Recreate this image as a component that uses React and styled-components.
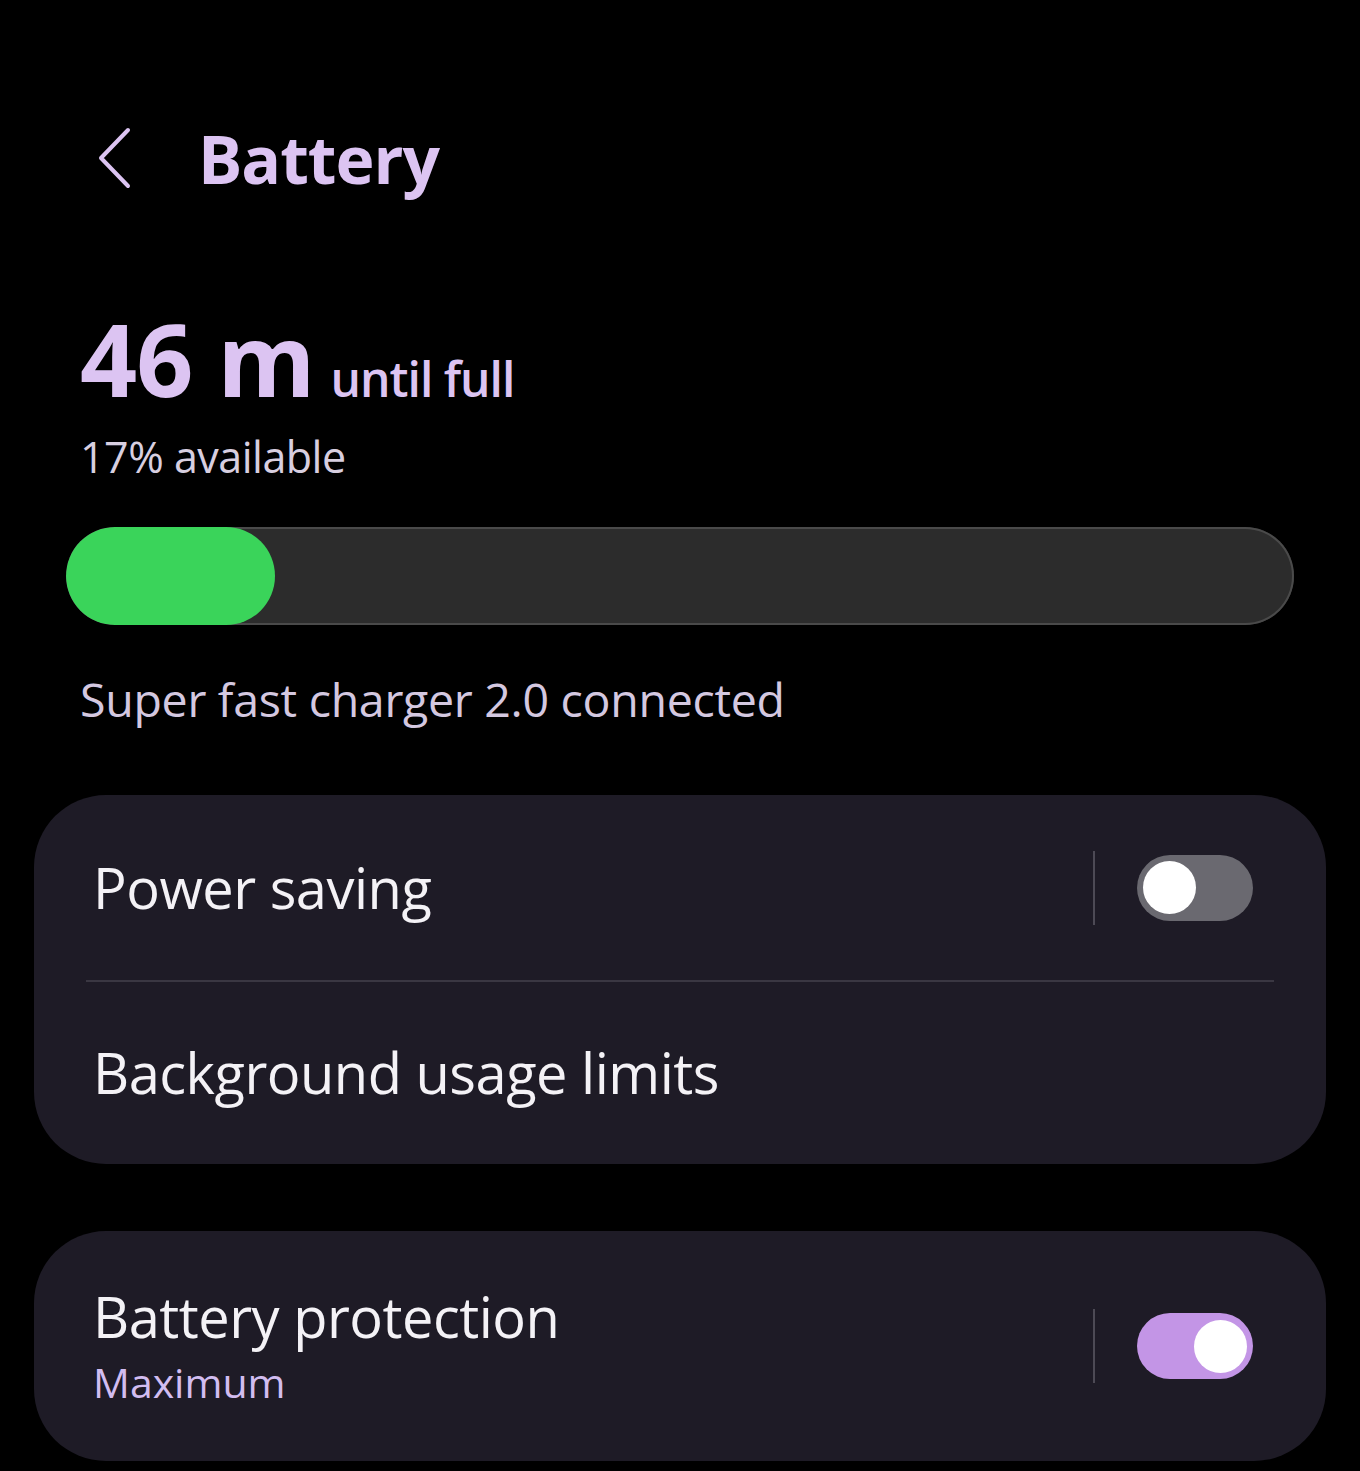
import React from 'react';
import styled, { createGlobalStyle } from 'styled-components';

const Global = createGlobalStyle`
  html, body {
    margin: 0;
    background: #000;
  }
  body {
    font-family: "Open Sans", "Noto Sans", sans-serif;
    -webkit-font-smoothing: antialiased;
  }
`;

const Screen = styled.div`
  width: 1360px;
  height: 1471px;
  background: #000;
  overflow: hidden;
  box-sizing: border-box;
  padding-top: 120px;
`;

const Header = styled.div`
  display: flex;
  align-items: center;
  padding-left: 94px;
  height: 76px;
`;

const Back = styled.button`
  background: none;
  border: 0;
  padding: 0;
  width: 40px;
  height: 64px;
  display: flex;
  align-items: center;
  justify-content: center;
  margin-right: 64px;
`;

const Title = styled.h1`
  margin: 0;
  color: #dcc4f2;
  font-size: 66px;
  font-weight: 700;
  letter-spacing: -1px;
`;

const Summary = styled.div`
  padding: 0 80px;
  margin-top: 112px;
`;

const Remaining = styled.div`
  display: flex;
  align-items: baseline;
  color: #dcc4f2;
  line-height: 1;
`;

const Big = styled.span`
  font-size: 100px;
  font-weight: 700;
  letter-spacing: -1px;
`;

const Small = styled.span`
  font-size: 48px;
  font-weight: 600;
  margin-left: 16px;
  letter-spacing: -1px;
`;

const Available = styled.div`
  color: #d8cfe0;
  font-size: 43px;
  margin-top: 19px;
  letter-spacing: -0.5px;
`;

const Track = styled.div`
  margin: 41px 66px 0 66px;
  height: 98px;
  border-radius: 49px;
  background: #2c2c2c;
  box-shadow: inset 0 0 0 2px #4a4a4a;
  overflow: hidden;
`;

const Fill = styled.div`
  height: 100%;
  border-radius: 49px;
  background: #3ad45a;
`;

const Charger = styled.div`
  color: #d4c8e0;
  font-size: 46.5px;
  padding-left: 80px;
  margin-top: 42px;
  letter-spacing: -0.3px;
`;

const Card = styled.div`
  margin: ${p => p.$top}px 34px 0 34px;
  background: #1e1b26;
  border-radius: 72px;
  padding: 0 73px 0 52px;
`;

const Row = styled.div`
  display: flex;
  align-items: center;
  height: ${p => p.$h}px;
  padding-left: 7px;
`;

const Label = styled.div`
  flex: 1;
  display: flex;
  flex-direction: column;
`;

const Main = styled.div`
  color: #f4f2f6;
  font-size: 56px;
  letter-spacing: -0.5px;
  line-height: 1.2;
`;

const Sub = styled.div`
  color: #d2bdf0;
  font-size: 41px;
  line-height: 1.3;
  margin-top: 6px;
`;

const Divider = styled.div`
  height: 2px;
  margin-right: -21px;
  background: #3a3742;
`;

const Sep = styled.div`
  width: 2px;
  height: 74px;
  background: #4d4a55;
  margin-right: 42px;
`;

const Switch = styled.div`
  width: 116px;
  height: 66px;
  border-radius: 33px;
  background: ${p => (p.$on ? '#c395e6' : '#6a6970')};
  display: flex;
  align-items: center;
  justify-content: ${p => (p.$on ? 'flex-end' : 'flex-start')};
  padding: 0 6px;
  box-sizing: border-box;
`;

const Knob = styled.div`
  width: 53px;
  height: 53px;
  border-radius: 50%;
  background: #fff;
`;

export default function App() {
  const level = 17;
  return (
    <Screen>
      <Global />
      <Header>
        <Back aria-label="Back">
          <svg width="36" height="62" viewBox="0 0 36 62">
            <path d="M32 3 L5 31 L32 59" fill="none" stroke="#dcc4f2" strokeWidth="4" strokeLinecap="round" strokeLinejoin="round" />
          </svg>
        </Back>
        <Title>Battery</Title>
      </Header>
      <Summary>
        <Remaining>
          <Big>46 m</Big>
          <Small>until full</Small>
        </Remaining>
        <Available>{level}% available</Available>
      </Summary>
      <Track>
        <Fill style={{ width: `${level}%` }} />
      </Track>
      <Charger>Super fast charger 2.0 connected</Charger>
      <Card $top={64}>
        <Row $h={185}>
          <Label><Main>Power saving</Main></Label>
          <Sep />
          <Switch><Knob /></Switch>
        </Row>
        <Divider />
        <Row $h={182}>
          <Label><Main>Background usage limits</Main></Label>
        </Row>
      </Card>
      <Card $top={67}>
        <Row $h={230}>
          <Label>
            <Main>Battery protection</Main>
            <Sub>Maximum</Sub>
          </Label>
          <Sep />
          <Switch $on><Knob /></Switch>
        </Row>
      </Card>
    </Screen>
  );
}
